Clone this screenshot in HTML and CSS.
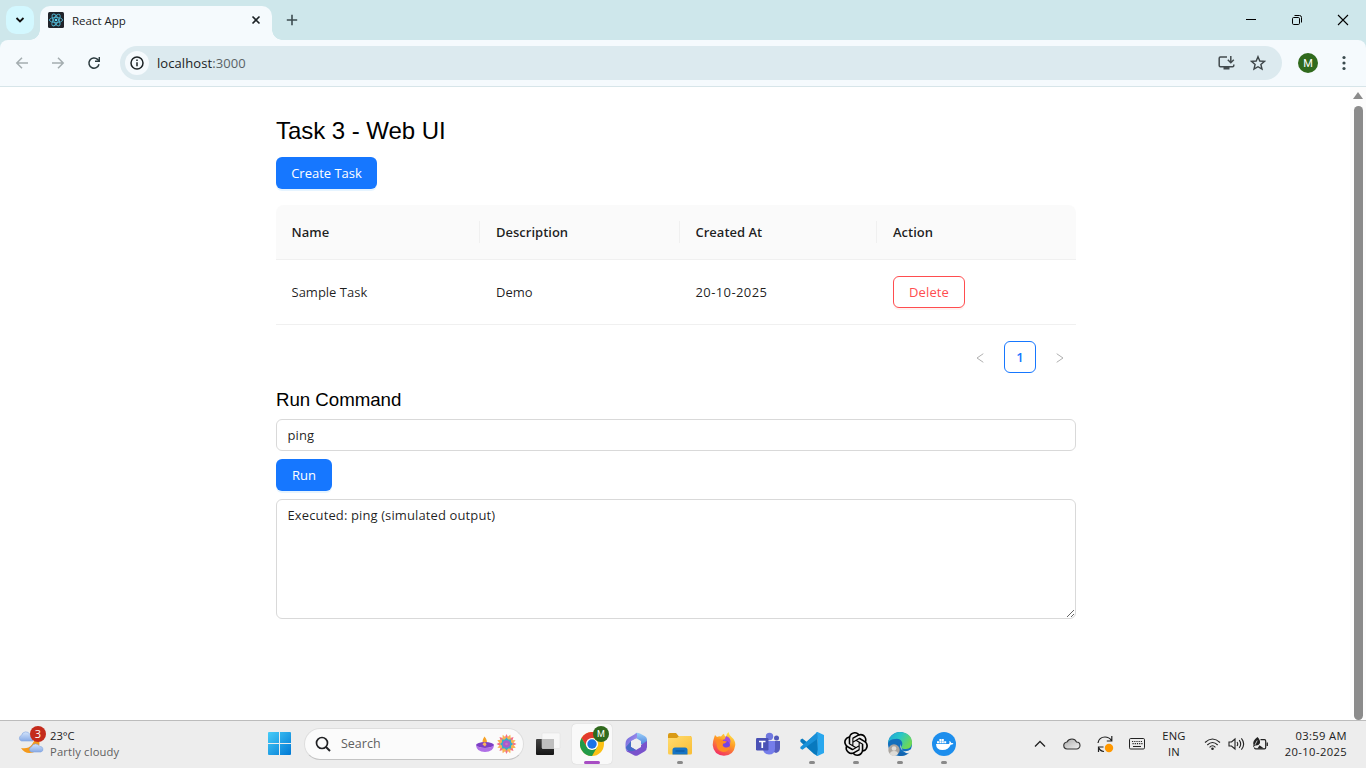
FILE: index.html
```html
<!DOCTYPE html>
<html lang="en">
<head>
<meta charset="utf-8">
<title>React App</title>
<link rel="stylesheet" href="styles.css">
</head>
<body>
<div class="screen">
  <header class="tabstrip">
    <button class="tab-search" aria-label="Search tabs"><svg width="10" height="8" viewBox="0 0 10 8"><path d="M1.500 2l3.500 3.500L8.500 2" fill="none" stroke="#111" stroke-width="1.800"/></svg></button>
    <div class="tab">
      <svg class="favicon" width="16" height="16" viewBox="0 0 16 16"><rect width="16" height="16" rx="1.500" fill="#20232a"/><g fill="none" stroke="#4fb3cf" stroke-width=".9"><ellipse cx="8" cy="8" rx="6.600" ry="2.600"/><ellipse cx="8" cy="8" rx="6.600" ry="2.600" transform="rotate(60 8 8)"/><ellipse cx="8" cy="8" rx="6.600" ry="2.600" transform="rotate(120 8 8)"/></g><circle cx="8" cy="8" r="1.300" fill="#61dafb"/></svg>
      <span class="tab-title">React App</span>
      <svg class="tab-close" width="10" height="10" viewBox="0 0 10 10"><path d="M1.500 1.500l7 7M8.500 1.500l-7 7" stroke="#1c2326" stroke-width="1.600"/></svg>
    </div>
    <svg class="new-tab" width="12" height="12" viewBox="0 0 12 12"><path d="M6 .8v10.400M.8 6h10.400" stroke="#3c4c50" stroke-width="1.600"/></svg>
    <div class="window-buttons">
      <svg width="12" height="12" viewBox="0 0 12 12"><path d="M1 5.500h10" stroke="#000"/></svg>
      <svg width="12" height="12" viewBox="0 0 12 12"><g fill="none" stroke="#000"><rect x="1.500" y="3.500" width="7" height="7" rx="1.200"/><path d="M3.500 1.500h5a2 2 0 0 1 2 2v5"/></g></svg>
      <svg width="12" height="12" viewBox="0 0 12 12"><path d="M1 1l10 10M11 1L1 11" stroke="#000" stroke-width="1.100"/></svg>
    </div>
  </header>

  <nav class="toolbar">
    <svg class="nav-icon" width="14" height="14" viewBox="0 0 14 14"><path d="M13 7H2M7 1.800L1.800 7 7 12.200" fill="none" stroke="#a4adb0" stroke-width="1.500"/></svg>
    <svg class="nav-icon" width="14" height="14" viewBox="0 0 14 14"><path d="M1 7h11M7 1.800L12.200 7 7 12.200" fill="none" stroke="#a4adb0" stroke-width="1.500"/></svg>
    <svg class="nav-icon" width="14" height="14" viewBox="0 0 14 14"><path d="M12 8.300A5.100 5.100 0 1 1 10.600 3.400L12 4.800" fill="none" stroke="#2c3b3f" stroke-width="1.500"/><path d="M12.300 1v4.300H8" fill="none" stroke="#2c3b3f" stroke-width="1.400"/></svg>
    <div class="omnibox">
      <span class="site-info"><svg width="14" height="14" viewBox="0 0 14 14"><circle cx="7" cy="7" r="6" fill="none" stroke="#1b2224" stroke-width="1.500"/><path d="M7 6.300v4M7 3.600v1.500" stroke="#1b2224" stroke-width="1.500"/></svg></span>
      <span class="url">localhost<span class="port">:3000</span></span>
      <svg class="install" width="17" height="16" viewBox="0 0 17 16"><path d="M9 2H2.400Q1.200 2 1.200 3.200v7.300q0 1.200 1.200 1.200h12.200q1.200 0 1.200-1.200V9.500" fill="none" stroke="#434b4e" stroke-width="1.500"/><path d="M5.500 12h6v2.500h-6z" fill="#434b4e"/><path d="M12.800 1v6.500M9.800 4.800l3 3 3-3" fill="none" stroke="#434b4e" stroke-width="1.500"/></svg>
      <svg class="star" width="16" height="16" viewBox="0 0 16 16"><path d="M8 1.700l1.800 4.300 4.700.4-3.600 3.100 1.100 4.600L8 11.700l-4 2.400 1.100-4.600L1.500 6.400 6.200 6z" fill="none" stroke="#3c4447" stroke-width="1.400"/></svg>
    </div>
    <span class="profile">M</span>
    <svg class="kebab" width="4" height="16" viewBox="0 0 4 16"><g fill="#3a4a4e"><circle cx="2" cy="2.500" r="1.600"/><circle cx="2" cy="8" r="1.600"/><circle cx="2" cy="13.500" r="1.600"/></g></svg>
  </nav>

  <div class="viewport">
    <main class="page">
      <h2 class="title">Task 3 - Web UI</h2>
      <button class="btn btn-primary btn-create">Create Task</button>
      <table class="tasks">
        <colgroup><col class="col-name"><col class="col-desc"><col class="col-date"><col class="col-action"></colgroup>
        <thead><tr><th>Name</th><th>Description</th><th>Created At</th><th>Action</th></tr></thead>
        <tbody><tr><td>Sample Task</td><td>Demo</td><td class="date">20-10-2025</td><td><button class="btn btn-danger">Delete</button></td></tr></tbody>
      </table>
      <div class="pagination">
        <span class="page-arrow"><svg width="8" height="10" viewBox="0 0 8 10"><path d="M7.300.7L1 5l6.300 4.300" fill="none" stroke="#b0b0b0"/></svg></span>
        <span class="page-number">1</span>
        <span class="page-arrow"><svg width="8" height="10" viewBox="0 0 8 10"><path d="M.7.7L7 5 .7 9.300" fill="none" stroke="#b0b0b0"/></svg></span>
      </div>
      <h3 class="subtitle">Run Command</h3>
      <input class="field command" value="ping">
      <button class="btn btn-primary btn-run">Run</button>
      <textarea class="field output">Executed: ping (simulated output)</textarea>
    </main>
    <div class="scrollbar"><span class="scroll-up"></span><span class="thumb"></span></div>
  </div>

  <footer class="taskbar">
    <div class="weather">
      <svg width="30" height="32" viewBox="0 0 30 32"><defs><linearGradient id="cl" x2="0" y2="1"><stop stop-color="#d3e4fb"/><stop offset="1" stop-color="#88abe6"/></linearGradient></defs><path d="M21 14a10 10 0 0 1-5 14.500Q8 30.500 4 24q7 1.500 11-3.500 2.500-3 3-7z" fill="#f59a1b"/><path d="M4.500 17a2.900 2.900 0 0 1 0-5.600 4.500 4.500 0 0 1 8.500-.9l3 6.500z" fill="url(#cl)" stroke="#85a6df" stroke-width=".6"/><path d="M14.500 28a2.700 2.700 0 0 1 0-5.200 4.500 4.500 0 0 1 8.300-.3 2.800 2.800 0 0 1 1 5.500z" fill="url(#cl)" stroke="#7fa3df" stroke-width=".6"/></svg>
      <span class="badge">3</span>
      <div class="weather-text"><span class="temp">23°C</span><span class="condition">Partly cloudy</span></div>
    </div>
    <svg class="start" width="24" height="24" viewBox="0 0 24 24"><defs><linearGradient id="win" x2="1" y2="1"><stop stop-color="#46ccf8"/><stop offset="1" stop-color="#0078d4"/></linearGradient></defs><path d="M0 1q0-1 1-1h10v11H0zM12 0h10q1 0 1 1v10H12zM0 12h11v11H1q-1 0-1-1zM12 12h11v10q0 1-1 1H12z" fill="url(#win)"/></svg>
    <div class="search">
      <svg width="16" height="16" viewBox="0 0 16 16"><circle cx="7" cy="7" r="5.500" fill="none" stroke="#202124" stroke-width="1.700"/><path d="M11 11l4 4" stroke="#202124" stroke-width="2"/></svg>
      <span class="search-label">Search</span>
      <svg width="42" height="22" viewBox="0 0 42 22"><path d="M8 11Q6.500 8 9.500 3.500q3.500 4 2 7.500z" fill="#f6a329"/><ellipse cx="10" cy="12" rx="9" ry="3" fill="#7c3fc4"/><path d="M1 12q.5 7 9 7t9-7q-3 3-9 3t-9-3z" fill="#b06fe6"/><path d="M7.500 11.500Q10 7 11.500 11.500l-1.500 2z" fill="#f8b45c"/><g transform="translate(31.500 11)"><path d="M0-10l2.200 4.500L7-7.100 5.600-2.200 10 0 5.600 2.200 7 7.100 2.200 5.600 0 10-2.200 5.600-7 7.100-5.600 2.200-10 0-5.600-2.200-7-7.100-2.200-5.600z" fill="#f56f86"/><path d="M0-10L2.500-5.500 7-7 5.500-2.500 10 0 5.500 2.500 7 7 2.500 5.500 0 10-2.500 5.500-7 7-5.500 2.500-10 0-5.500-2.500-7-7-2.500-5.500z" fill="#f7b452" transform="rotate(22.500)"/><path d="M0-6.500l1.700 2L4.600-4.600 4.500-1.700 6.500 0 4.500 1.700l.1 2.900-2.900-.1L0 6.500l-1.700-2-2.900.1.1-2.900L-6.500 0l2-1.700-.1-2.900 2.900.1z" fill="#35aeca"/><circle r="3.800" fill="#a75bcc"/><circle r="1.300" fill="#d06fc0"/></g></svg>
    </div>
    <div class="apps">
      <span class="app"><svg width="26" height="26" viewBox="0 0 26 26"><defs><linearGradient id="tv" x2="0" y2="1"><stop stop-color="#444"/><stop offset="1" stop-color="#151515"/></linearGradient></defs><rect x="1" y="8" width="18" height="16" rx="1" fill="url(#tv)"/><rect x="7" y="2" width="18" height="15.500" rx="1" fill="#f7f7f7" stroke="#ddd" stroke-width=".5"/><path d="M7 8h12v9.500H7z" fill="#bfbfbf"/></svg></span>
      <span class="app active"><svg width="24" height="24" viewBox="0 0 24 24"><circle cx="12" cy="12" r="12" fill="#fbc116"/><path d="M1.600 6A12 12 0 0 1 22.400 6H12L6.800 15z" fill="#e33b2e"/><path d="M1.600 6A12 12 0 0 0 12 24l5.200-9L12 18l-5.200-3z" fill="#229a49"/><circle cx="12" cy="12" r="6.100" fill="#fff"/><circle cx="12" cy="12" r="4.700" fill="#1a73e8"/></svg><span class="app-badge">M</span><span class="indicator"></span></span>
      <span class="app"><svg width="24" height="24" viewBox="0 0 24 24"><defs><linearGradient id="m1" x2="1" y2="1"><stop stop-color="#6a5fd8"/><stop offset="1" stop-color="#b9a7f4"/></linearGradient><linearGradient id="m2" x2="0" y2="1"><stop stop-color="#9cd0fa"/><stop offset="1" stop-color="#3970d4"/></linearGradient></defs><path d="M12 .8Q14 .3 16 1.400l5 2.900q2 1.200 2 3.400v8L17 12V9l-5-3-6 3z" fill="url(#m2)"/><path d="M13 1L6 5Q1.500 7 1.500 12v4q0 3 2.500 4.200l3-3.200V9l6-3z" fill="url(#m1)"/><path d="M3 19.500l7 3.700q2 1 4 0l6.500-3.700q2.500-1.500 2.500-5V9l-6 4v2l-5 3-5-3z" fill="#7952cc"/><path d="M2 15q0 3 3.500 4 3.500.5 6.500-1l-5-3V9z" fill="#456bc7"/><circle cx="12" cy="12" r="4.600" fill="#eee"/></svg></span>
      <span class="app"><svg width="26" height="24" viewBox="0 0 26 24"><defs><linearGradient id="fd" x2="1" y2="1"><stop stop-color="#ffdc70"/><stop offset="1" stop-color="#f9bd35"/></linearGradient></defs><path d="M1 3q0-2 2-2h6l2.500 3H24v6H1z" fill="#d99a15"/><path d="M1 6h9l2-2h11q2 0 2 2v15q0 1.500-1.500 1.500H2.500Q1 22.500 1 21z" fill="url(#fd)"/><path d="M5.500 22.500V18q0-2.500 2.500-2.500h10q2.500 0 2.500 2.500v4.500z" fill="#1674c4"/><path d="M8.500 19h9" stroke="#0c59a2" stroke-width="1.200"/></svg><span class="indicator"></span></span>
      <span class="app"><svg width="24" height="24" viewBox="0 0 24 24"><defs><linearGradient id="ff" x1=".8" x2=".3" y2="1"><stop stop-color="#ffed4a"/><stop offset=".45" stop-color="#ff9a25"/><stop offset="1" stop-color="#f22b67"/></linearGradient></defs><path d="M2 6l1-3 2 2q2-1 4-.5Q11 2 12 1.700q0 2 2 3.300 0-3 2.500-5Q17 3 20 5.500q3.500 3 3.300 7.500Q22 23.500 12 23.700 1.500 23 .7 13 .8 9 2 6z" fill="url(#ff)"/><circle cx="12.500" cy="13" r="5.500" fill="#7542e5"/><path d="M4 8q5-2 8 1l3 .5q-2 2.300-4 2.300-1 2.200 1 3.200 3 1.500 6-1-1 6-7 6-5-1-6-5z" fill="#ff8b24"/><path d="M12 9q4-2 6 3 2-6-4-8-1 3-2 5z" fill="#a44bdd"/></svg></span>
      <span class="app"><svg width="26" height="24" viewBox="0 0 26 24"><circle cx="14.500" cy="4.500" r="3.700" fill="#7078df"/><circle cx="21.500" cy="6" r="2.500" fill="#5057b8"/><path d="M17 9h8v7q0 4-4 5-4-1-4-5z" fill="#555bbd"/><path d="M8 9h12v7.500q0 6-6 6-6-.5-6-6z" fill="#757dea"/><rect x="1" y="6" width="12.500" height="12.500" rx="1.200" fill="#4a51b5"/><path d="M4 9.500h6.500M7.250 9.500v6.500" stroke="#fff" stroke-width="1.700"/></svg></span>
      <span class="app"><svg width="24" height="24" viewBox="0 0 24 24"><path d="M17.500 0L6.800 10 2.300 6.500.4 7.700v2L14 22l3.500 2 .5-6.500z" fill="#0879be"/><path d="M17.500 0L.4 15v1.600l2 1.100L18 6.500z" fill="#1990d8"/><path d="M17.500 0l6.500 3v18l-6.500 3q-1 0-1.500-1l1.700-.5V1.500L16 1q.5-1 1.500-1z" fill="#29a7ee"/></svg><span class="indicator"></span></span>
      <span class="app"><svg width="24" height="24" viewBox="0 0 24 24"><path fill="#000" d="M22.282 9.821a5.985 5.985 0 0 0-.516-4.910 6.046 6.046 0 0 0-6.510-2.900A6.065 6.065 0 0 0 4.981 4.182a5.985 5.985 0 0 0-3.998 2.900 6.046 6.046 0 0 0 .743 7.097 5.980 5.980 0 0 0 .510 4.911 6.051 6.051 0 0 0 6.515 2.900A5.985 5.985 0 0 0 13.260 24a6.056 6.056 0 0 0 5.772-4.206 5.990 5.990 0 0 0 3.998-2.900 6.056 6.056 0 0 0-.748-7.073zM13.260 22.430a4.476 4.476 0 0 1-2.876-1.040l.141-.081 4.779-2.758a.795.795 0 0 0 .393-.681v-6.737l2.020 1.169a.071.071 0 0 1 .038.052v5.583a4.504 4.504 0 0 1-4.495 4.493zM3.600 18.304a4.471 4.471 0 0 1-.535-3.014l.142.085 4.783 2.759a.771.771 0 0 0 .781 0l5.843-3.369v2.332a.080.080 0 0 1-.033.062L9.740 19.950a4.500 4.500 0 0 1-6.140-1.646zM2.341 7.896a4.485 4.485 0 0 1 2.366-1.973V11.600a.766.766 0 0 0 .388.677l5.814 3.354-2.020 1.169a.076.076 0 0 1-.071 0l-4.830-2.787A4.504 4.504 0 0 1 2.341 7.896zm16.597 3.855l-5.833-3.387L15.119 7.200a.076.076 0 0 1 .071 0l4.830 2.791a4.494 4.494 0 0 1-.676 8.105v-5.678a.790.790 0 0 0-.406-.667zm2.010-3.023l-.141-.085-4.774-2.782a.776.776 0 0 0-.785 0L9.409 9.230V6.897a.066.066 0 0 1 .028-.061l4.830-2.787a4.499 4.499 0 0 1 6.681 4.660zm-12.640 4.135l-2.020-1.164a.080.080 0 0 1-.038-.057V6.074a4.499 4.499 0 0 1 7.376-3.453l-.142.080-4.778 2.758a.795.795 0 0 0-.393.681zm1.097-2.365l2.602-1.500 2.607 1.500v2.999l-2.597 1.500-2.607-1.500z"/></svg><span class="indicator"></span></span>
      <span class="app"><svg width="24" height="24" viewBox="0 0 24 24"><defs><linearGradient id="eg" x2="1" y2=".5"><stop stop-color="#209fd9"/><stop offset=".5" stop-color="#28c7c7"/><stop offset="1" stop-color="#6ed856"/></linearGradient></defs><circle cx="12" cy="12" r="12" fill="#126fbd"/><path d="M0 11A12 12 0 0 1 12 0q12 1 12 11 0 5.500-6 6-5 0-5-2 2-2 1-5-2-4-7-3-5 0-7 4z" fill="url(#eg)"/><path d="M12.500 12q-1 5 3 7 4 1 7-1.500l1.500.5-2 3.500q-9 0-9.500-9.500z" fill="#ededed"/><path d="M9.500 11q-1 9 7 10.500 3 .5 5-1Q18 24 12 24q-6-2-5-9z" fill="#1464ae"/><circle cx="6" cy="18" r="5.700" fill="#aaa59f"/><circle cx="6" cy="16.500" r="2.300" fill="#e0ded9"/><path d="M2 22q0-3 4-3t4 3q-2 2-4 2t-4-2z" fill="#dedbd6"/></svg><span class="indicator"></span></span>
      <span class="app"><svg width="24" height="24" viewBox="0 0 24 24"><circle cx="12" cy="12" r="12" fill="#1d8eed"/><path d="M4 12h13q1-1 .2-3Q19 9.500 19.300 11q1.500-.3 2.200.3-.8 1.500-2.800 1.500Q16.500 18 10.500 18 4.200 18 4 12z" fill="#fff"/><path d="M5 9.300h2v2H5zM7.400 9.300h2v2h-2zM9.800 9.300h2v2h-2zM12.200 9.300h2v2h-2zM7.400 7h2v2h-2zM9.800 7h2v2h-2z" fill="#fff"/></svg><span class="indicator"></span></span>
    </div>
    <div class="tray">
      <svg class="t-chevron" width="12" height="8" viewBox="0 0 12 8"><path d="M1 6.500l5-5 5 5" fill="none" stroke="#222" stroke-width="1.300"/></svg>
      <svg class="t-cloud" width="18" height="14" viewBox="0 0 18 14"><defs><linearGradient id="oc" x2="1" y2="1"><stop stop-color="#aaa"/><stop offset="1" stop-color="#f2f2f2"/></linearGradient></defs><path d="M4.500 12a3.500 3.500 0 0 1-.5-7q1.500-3 5-3 3.300 0 4.500 3a3.500 3.500 0 0 1 0 7z" fill="url(#oc)" stroke="#333" stroke-width="1.100"/></svg>
      <svg class="t-sync" width="18" height="18" viewBox="0 0 18 18"><path d="M2 8Q3 2 9 2q4 0 6.500 3.500M15.800 1v5h-5M2.500 17v-5h5M3 13q1 3 5 3.500" fill="none" stroke="#222" stroke-width="1.200"/><circle cx="13" cy="13" r="4.200" fill="#ff9800"/></svg>
      <svg class="t-keyboard" width="16" height="12" viewBox="0 0 16 12"><rect x=".5" y=".5" width="15" height="10.500" rx="1.200" fill="none" stroke="#222"/><path d="M3 3.500h10M3.500 5.700h10" stroke="#222" stroke-width="1.200" stroke-dasharray="1.200 1"/><path d="M4 8.500h8" stroke="#222"/></svg>
      <div class="language"><span>ENG</span><span>IN</span></div>
      <svg class="t-wifi" width="17" height="14" viewBox="0 0 17 14"><g fill="none" stroke="#222" stroke-width="1.100"><path d="M1 5.500q7.500-7 15 0M3.300 8q5.200-5 10.400 0M5.600 10.300q2.900-3 5.800 0"/></g><circle cx="8.500" cy="11.800" r="1.300" fill="#222"/></svg>
      <svg class="t-volume" width="17" height="14" viewBox="0 0 17 14"><g fill="none" stroke="#222" stroke-width="1.100"><path d="M1 5h2.500L7 2v10L3.500 9H1zM9 5q1.500 2 0 4M11.200 3.200q3 3.800 0 7.600M13.400 1.400q4.500 5.600 0 11.200"/></g></svg>
      <svg class="t-battery" width="17" height="14" viewBox="0 0 17 14"><path d="M8.500 2.700h4q1.200 0 1.200 1.300v6.500q0 1.300-1.200 1.300H3.700q-1.200 0-1.200-1.300M15.300 5.500v3.500" fill="none" stroke="#222" stroke-width="1.200"/><path d="M5.500 0Q9 3.500 7.800 6.500 6.500 9 3 8.500L1 10.500 1.500 8Q0 4 5.500 0zM7.500 8.200L12 11.500H5.500z" fill="#222"/><path d="M5.200 3.500L3 7.800" stroke="#ededed" stroke-width=".8"/></svg>
      <div class="clock"><span>03:59 AM</span><span class="clock-date">20-10-2025</span></div>
    </div>
  </footer>
</div>
</body>
</html>
```
FILE: styles.css
```css
* { box-sizing: border-box; }
body { margin: 0; background: #fff; font-family: "Open Sans", "Noto Sans", sans-serif; overflow: hidden; }
button, input, textarea { font: inherit; margin: 0; }
svg { display: block; flex: none; }
.screen { width: 1366px; height: 768px; display: flex; flex-direction: column; overflow: hidden; }

.tabstrip { height: 40px; flex: none; display: flex; align-items: center; background: #cee7eb; z-index: 1; }
.tab-search { width: 28px; height: 28px; margin-left: 6px; border: 0; border-radius: 10px; background: #d3f8ff; padding: 0; display: flex; align-items: center; justify-content: center; }
.tab { position: relative; align-self: flex-end; width: 232px; height: 34px; margin-left: 6px; padding: 0 11px 6px 8px; display: flex; align-items: center; background: #f5fafd; border-radius: 10px 10px 0 0; }
.tab::before, .tab::after { content: ""; position: absolute; bottom: 0; width: 10px; height: 10px; }
.tab::before { left: -10px; background: radial-gradient(circle at 0 0, transparent 9.5px, #f5fafd 10px); }
.tab::after { right: -10px; background: radial-gradient(circle at 100% 0, transparent 9.5px, #f5fafd 10px); }
.tab-title { margin-left: 8px; padding-top: 2px; font-size: 11.5px; color: #1b2224; line-height: 16px; flex: 1; }
.new-tab { margin-left: 14px; }
.window-buttons { margin-left: auto; margin-right: 17px; display: flex; gap: 34px; }

.toolbar { height: 47px; flex: none; display: flex; align-items: center; padding: 0 20px 1px 15px; background: #f5fafd; border-bottom: 1px solid #d7e5e9; box-shadow: 0 -10px 0 #cee7eb; border-radius: 8px 8px 0 0; }
.nav-icon { margin-right: 22px; }
.nav-icon + .nav-icon + .nav-icon { margin-right: 19px; }
.omnibox { width: 1162px; height: 34px; padding: 0 16px 0 5px; border-radius: 17px; background: #dceaef; display: flex; align-items: center; }
.site-info { width: 24px; height: 24px; border-radius: 50%; background: #f5fafd; display: flex; align-items: center; justify-content: center; }
.url { flex: 1; margin-left: 8px; font-size: 13px; line-height: 20px; letter-spacing: .08px; color: #1b2224; }
.port { color: #5a6366; }
.star { margin-left: 15px; }
.profile { width: 20px; height: 20px; margin-left: 16px; border-radius: 50%; background: #306a1d; color: #fff; font: 11px/21px Roboto, sans-serif; text-align: center; }
.kebab { margin-left: auto; }

.viewport { height: 633px; flex: none; display: flex; justify-content: space-between; }
.page { width: 800px; margin-left: 276px; padding-top: 30px; display: flex; flex-direction: column; align-items: flex-start; font-size: 13px; color: rgba(0, 0, 0, .88); }
.title, .subtitle { margin: 0; font-family: "Liberation Sans", Arial, sans-serif; font-weight: 400; color: #000; }
.title { font-size: 24px; line-height: 28px; margin-bottom: 12px; letter-spacing: -.04px; }
.subtitle { font-size: 18.72px; line-height: 22px; margin: 16px 0 8px; letter-spacing: -.04px; }
.btn { height: 32px; padding: 0; border: 0; border-radius: 6px; line-height: 22px; }
.btn-primary { background: #1677ff; color: #fff; box-shadow: 0 2px 0 rgba(5, 145, 255, .1); }
.btn-create { width: 101px; margin-bottom: 16px; }
.btn-run { width: 56px; margin: 8px 0; }
.btn-danger { display: block; width: 72px; border: 1px solid #ff4d4f; background: #fff; color: #ff4d4f; letter-spacing: .1px; box-shadow: 0 2px 0 rgba(255, 38, 5, .06); }
.tasks { width: 800px; table-layout: fixed; border-collapse: separate; border-spacing: 0; text-align: left; }
.col-name { width: 204px; }
.col-desc { width: 200px; }
.col-date { width: 197px; }
.tasks th, .tasks td { padding: 0 16px 0 15.5px; border-bottom: 1px solid #f0f0f0; }
.tasks th:last-child, .tasks td:last-child { padding-left: 16px; }
.tasks th { position: relative; height: 55px; background: #fafafa; font-weight: 600; }
.tasks td { height: 65px; }
.tasks th:not(:last-child)::after { content: ""; position: absolute; right: 0; top: 16px; width: 1px; height: 22px; background: #f0f0f0; }
.tasks th:nth-child(2), .tasks td:nth-child(2) { padding-left: 16px; }
.tasks th:first-child { border-top-left-radius: 8px; }
.tasks th:last-child { border-top-right-radius: 8px; }
.tasks .date { letter-spacing: .4px; }
.pagination { align-self: flex-end; display: flex; gap: 8px; margin-top: 16px; }
.page-arrow, .page-number { width: 32px; height: 32px; display: flex; align-items: center; justify-content: center; }
.page-arrow { padding-top: 2px; }
.page-number { border: 1px solid #1677ff; border-radius: 6px; color: #1677ff; font-weight: 600; }
.field { width: 800px; border: 1px solid #d9d9d9; border-radius: 6px; padding: 4px 11px 4px 10.5px; background: #fff; color: inherit; line-height: 22px; letter-spacing: .12px; outline: 0; }
.command { height: 32px; }
.output { display: block; height: 120px; resize: vertical; }
.scrollbar { width: 16px; background: #fcfcfc; display: flex; flex-direction: column; align-items: center; padding-top: 5px; }
.scroll-up { border: 5px solid transparent; border-top: 0; border-bottom: 7px solid #8b8b8b; }
.thumb { width: 9px; height: 614px; margin-top: 7px; border-radius: 5px; background: #8b8b8b; }

.taskbar { height: 48px; flex: none; display: flex; align-items: center; padding-bottom: 1px; background: #ededed; border-top: 1px solid #bcbcbc; font-size: 11.2px; line-height: 16px; color: #202020; }
.weather { position: relative; width: 268px; padding-left: 17px; display: flex; align-items: center; }
.weather > svg { margin-top: -8px; }
.badge { position: absolute; left: 30px; top: -2px; width: 16px; height: 16px; border-radius: 50%; background: #c42b1c; color: #fff; text-align: center; font-size: 11px; line-height: 16px; }
.weather-text { display: flex; flex-direction: column; margin-left: 3px; }
.condition { color: #606060; letter-spacing: .18px; }
.start { margin-right: 12px; }
.search { width: 220px; height: 32px; padding: 0 6px 0 10px; border-radius: 16px; background: #fbfbfb; border: 1px solid #dedede; border-bottom-color: #c4c4c4; display: flex; align-items: center; }
.search-label { flex: 1; margin-left: 10px; font-size: 12.5px; color: #606060; }
.apps { display: flex; gap: 4px; margin-left: 4px; }
.app { position: relative; width: 40px; height: 40px; display: flex; align-items: center; justify-content: center; }
.app.active { border-radius: 4px; background: #f9f9f9; box-shadow: 0 0 1px #bbb; }
.app-badge { position: absolute; left: 21px; top: 2px; width: 16px; height: 16px; border-radius: 50%; background: #306a1d; color: #fff; font: 9px/16px Roboto, sans-serif; text-align: center; }
.indicator { position: absolute; left: 17px; bottom: 0; width: 6px; height: 3px; border-radius: 2px; background: #898989; }
.active .indicator { left: 12px; width: 16px; background: #a74dc3; }
.tray { margin-left: auto; padding-right: 19px; display: flex; align-items: center; }
.t-cloud { margin-left: 17px; }
.t-sync { margin-left: 15px; }
.t-keyboard { margin-left: 15px; }
.language { width: 38px; margin-left: 10px; display: flex; flex-direction: column; align-items: center; letter-spacing: .2px; }
.t-wifi { margin-left: 11px; }
.t-volume { margin-left: 7px; }
.t-battery { margin-left: 7px; }
.clock { width: 70px; margin-left: 8px; display: flex; flex-direction: column; align-items: flex-end; letter-spacing: .38px; }
```
